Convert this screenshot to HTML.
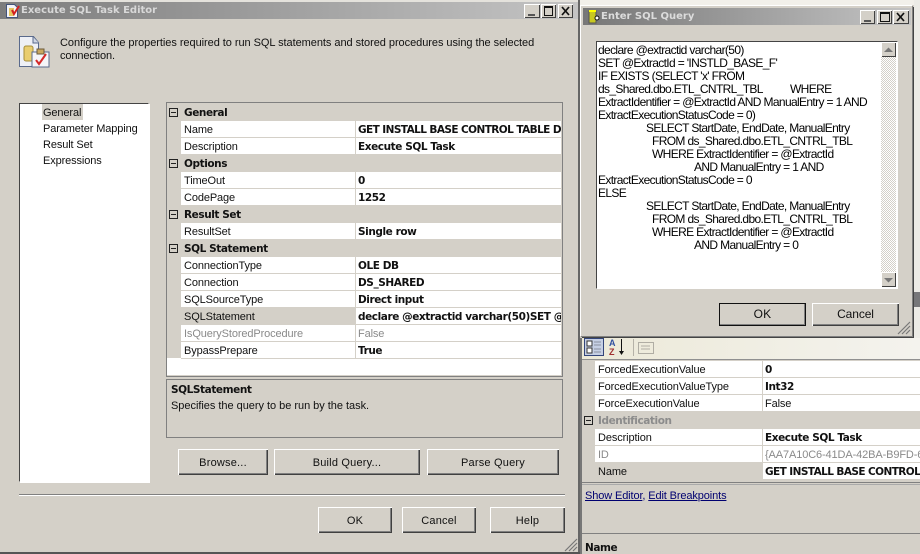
<!DOCTYPE html>
<html><head><meta charset="utf-8"><style>
html,body{margin:0;padding:0;background:#d4d0c8}
#p{position:relative;width:920px;height:554px;overflow:hidden;background:#d4d0c8;font:11px "Liberation Sans",sans-serif;color:#111}
#p div,#p svg{position:absolute}
.t{white-space:nowrap;line-height:14px;height:14px;margin-top:1px;letter-spacing:-.12px}
.b{font-family:"DejaVu Sans",sans-serif;font-weight:bold;font-size:10.5px;letter-spacing:-.42px}
.w{background:#fff}
.btn{background:#d4d0c8;box-shadow:inset 1px 1px 0 #fff,inset -1px -1px 0 #404040,inset -2px -2px 0 #808080;text-align:center;line-height:28px;font-size:11px;letter-spacing:.2px}
.tb{width:15px;height:14px;background:#d4d0c8;box-shadow:inset 1px 1px 0 #fff,inset -1px -1px 0 #404040}
.pm{width:7px;height:7px;border:1px solid #222;background:transparent}
.pm:after{content:"";position:absolute;left:1px;top:3px;width:5px;height:1px;background:#222}
.l{height:1px;background:#d4d0c8}
.q{font-size:12px;letter-spacing:-.64px;white-space:nowrap;line-height:13px;height:13px;color:#000;margin-top:1px}
</style></head><body><div id="p">

<!-- Left dialog -->
<div style="left:0;top:2px;width:578px;height:17px;background:linear-gradient(90deg,#7d7d7d,#c4c4c4)"></div>
<div style="left:0;top:0;width:578px;height:2px;background:#e4e2dc"></div>
<svg style="left:5px;top:3px" width="16" height="16" viewBox="0 0 16 16"><path d="M1.500 1.500h8l3 3v10h-11z" fill="#f4f4f8" stroke="#44557a"/><rect x="4" y="5" width="5" height="8" fill="#e6c660"/><path d="M7 7l2 4 5-8" fill="none" stroke="#d32020" stroke-width="2"/></svg>
<div class="t b" style="left:21px;top:3px;color:#d8d8d8;font-size:10px;letter-spacing:0">Execute SQL Task Editor</div>
<div class="tb" style="left:524px;top:4px;width:16px"></div>
<div style="left:528px;top:14px;width:7px;height:2px;background:#555"></div>
<div class="tb" style="left:541px;top:4px;width:15px"></div>
<div style="left:544px;top:6px;width:7px;height:7px;border:1px solid #111;border-top-width:2px"></div>
<div class="tb" style="left:558px;top:4px;width:15px"></div>
<svg style="left:558px;top:4px" width="15" height="14"><path d="M4 3l7 8M11 3l-7 8" stroke="#111" stroke-width="1.700"/></svg>
<div style="left:578px;top:0;width:2px;height:554px;background:#666"></div>
<div style="left:0;top:552px;width:580px;height:2px;background:#555"></div>

<!-- header -->
<svg style="left:18px;top:35px" width="34" height="33" viewBox="0 0 34 33"><path d="M1.500 1.500h14l5 6v24h-19z" fill="#eef0f6" stroke="#5a6a8c"/><path d="M15 2v6h6" fill="#cfd6e4" stroke="#5a6a8c"/><rect x="6" y="11" width="9" height="15" rx="2" fill="#e9cd70" stroke="#a58d3a"/><rect x="14" y="17" width="17" height="15" fill="#f5f5f8" stroke="#5a6a8c"/><rect x="19" y="14" width="7" height="5" fill="#c9a860" stroke="#6b5a3a"/><path d="M18 25l3 4 7-10" fill="none" stroke="#d42a2a" stroke-width="2"/></svg>
<div class="t" style="left:60px;top:35px;letter-spacing:-.05px">Configure the properties required to run SQL statements and stored procedures using the selected</div>
<div class="t" style="left:60px;top:48px">connection.</div>

<!-- list -->
<div class="w" style="left:19px;top:103px;width:128px;height:377px;border:1px solid #fff;border-left:1px solid #444;border-top:1px solid #444;box-shadow:1px 1px 0 #fff"></div>
<div style="left:42px;top:104px;width:41px;height:16px;background:#d4d0c8"></div>
<div class="t" style="left:43px;top:105px">General</div>
<div class="t" style="left:43px;top:121px">Parameter Mapping</div>
<div class="t" style="left:43px;top:137px">Result Set</div>
<div class="t" style="left:43px;top:153px">Expressions</div>

<!-- grid -->
<div style="left:166px;top:102px;width:395px;height:273px;border:1px solid #808080;background:#d4d0c8"></div>
<div class="w" style="left:181px;top:121px;width:380px;height:33px"></div>
<div class="w" style="left:181px;top:172px;width:380px;height:33px"></div>
<div class="w" style="left:181px;top:223px;width:380px;height:16px"></div>
<div class="w" style="left:181px;top:257px;width:380px;height:101px"></div>
<div style="left:181px;top:308px;width:174px;height:16px;background:#d4d0c8"></div>
<div class="w" style="left:167px;top:358px;width:394px;height:17px"></div>
<div class="l" style="left:181px;top:137px;width:380px"></div>
<div class="l" style="left:181px;top:188px;width:380px"></div>
<div class="l" style="left:181px;top:273px;width:380px"></div>
<div class="l" style="left:181px;top:290px;width:380px"></div>
<div class="l" style="left:181px;top:307px;width:380px"></div>
<div class="l" style="left:181px;top:324px;width:380px"></div>
<div class="l" style="left:181px;top:341px;width:380px"></div>
<div class="l" style="left:181px;top:358px;width:380px"></div>
<div style="left:355px;top:121px;width:1px;height:33px;background:#d4d0c8"></div>
<div style="left:355px;top:172px;width:1px;height:33px;background:#d4d0c8"></div>
<div style="left:355px;top:223px;width:1px;height:16px;background:#d4d0c8"></div>
<div style="left:355px;top:257px;width:1px;height:101px;background:#d4d0c8"></div>

<div class="pm" style="left:169px;top:108px"></div>
<div class="pm" style="left:169px;top:159px"></div>
<div class="pm" style="left:169px;top:210px"></div>
<div class="pm" style="left:169px;top:244px"></div>
<div class="t b" style="left:184px;top:105px">General</div>
<div class="t b" style="left:184px;top:156px">Options</div>
<div class="t b" style="left:184px;top:207px">Result Set</div>
<div class="t b" style="left:184px;top:241px">SQL Statement</div>

<div class="t" style="left:184px;top:122px">Name</div>
<div class="t" style="left:184px;top:139px">Description</div>
<div class="t" style="left:184px;top:173px">TimeOut</div>
<div class="t" style="left:184px;top:190px">CodePage</div>
<div class="t" style="left:184px;top:224px">ResultSet</div>
<div class="t" style="left:184px;top:258px">ConnectionType</div>
<div class="t" style="left:184px;top:275px">Connection</div>
<div class="t" style="left:184px;top:292px">SQLSourceType</div>
<div class="t" style="left:184px;top:309px">SQLStatement</div>
<div class="t" style="left:184px;top:326px;color:#8a8a8a">IsQueryStoredProcedure</div>
<div class="t" style="left:184px;top:343px">BypassPrepare</div>

<div style="left:358px;top:122px;width:203px;height:16px;overflow:hidden"><div class="t b" style="left:0;top:0;letter-spacing:-.58px">GET INSTALL BASE CONTROL TABLE D</div></div>
<div class="t b" style="left:358px;top:139px">Execute SQL Task</div>
<div class="t b" style="left:358px;top:173px">0</div>
<div class="t b" style="left:358px;top:190px">1252</div>
<div class="t b" style="left:358px;top:224px">Single row</div>
<div class="t b" style="left:358px;top:258px">OLE DB</div>
<div class="t b" style="left:358px;top:275px">DS_SHARED</div>
<div class="t b" style="left:358px;top:292px">Direct input</div>
<div style="left:358px;top:309px;width:203px;height:16px;overflow:hidden"><div class="t b" style="left:0;top:0">declare @extractid varchar(50)SET @Extr</div></div>
<div class="t" style="left:358px;top:326px;color:#8a8a8a">False</div>
<div class="t b" style="left:358px;top:343px">True</div>

<!-- description -->
<div style="left:166px;top:379px;width:395px;height:57px;border:1px solid #808080"></div>
<div class="t b" style="left:171px;top:382px">SQLStatement</div>
<div class="t" style="left:171px;top:398px;letter-spacing:-.03px">Specifies the query to be run by the task.</div>

<!-- buttons -->
<div class="btn" style="left:178px;top:449px;width:90px;height:26px">Browse...</div>
<div class="btn" style="left:274px;top:449px;width:146px;height:26px">Build Query...</div>
<div class="btn" style="left:427px;top:449px;width:132px;height:26px">Parse Query</div>
<div style="left:19px;top:494px;width:546px;height:1px;background:#808080"></div>
<div style="left:19px;top:495px;width:546px;height:1px;background:#fff"></div>
<div class="btn" style="left:318px;top:507px;width:74px;height:26px">OK</div>
<div class="btn" style="left:402px;top:507px;width:74px;height:26px">Cancel</div>
<div class="btn" style="left:490px;top:507px;width:75px;height:26px">Help</div>
<svg style="left:563px;top:537px" width="15" height="15"><path d="M2 14L14 2M6 14L14 6M10 14l4-4" stroke="#777" stroke-width="1.200"/></svg>

<!-- Right background -->
<div style="left:580px;top:0;width:340px;height:554px;background:#d4d0c8"></div>
<div style="left:580px;top:0;width:340px;height:5px;background:#f2f0ea"></div>
<div style="left:914px;top:0;width:6px;height:338px;background:#ecebe6"></div>
<div style="left:914px;top:292px;width:6px;height:15px;background:#77777a"></div>

<!-- properties panel -->
<div style="left:580px;top:338px;width:2px;height:216px;background:#777"></div>
<div style="left:582px;top:338px;width:338px;height:21px;background:linear-gradient(90deg,#ece9d8,#f4f3ee)"></div>
<div style="left:582px;top:359px;width:338px;height:1px;background:#909090"></div>
<svg style="left:584px;top:338px" width="80" height="20" viewBox="0 0 80 20"><rect x=".5" y=".5" width="19" height="17" fill="#c5cfe4" stroke="#33457a"/><rect x="3" y="3" width="5" height="5" fill="#fff" stroke="#333"/><rect x="3" y="10" width="5" height="5" fill="#fff" stroke="#333"/><path d="M10 4h7M10 7h7M10 11h7M10 14h7" stroke="#8a90a0"/><text x="25" y="8" font-family="Liberation Sans" font-size="9" font-weight="bold" fill="#3050a0">A</text><text x="25" y="17" font-family="Liberation Sans" font-size="9" font-weight="bold" fill="#a03030">Z</text><path d="M37.500 1v13" stroke="#111"/><path d="M35 13h5l-2.500 4z" fill="#111"/><path d="M49.500 1v17" stroke="#b5b2a8"/><rect x="54.500" y="4.500" width="15" height="11" fill="none" stroke="#b0ada4"/><path d="M57 8h9M57 11h9" stroke="#b0ada4"/></svg>

<div class="w" style="left:595px;top:361px;width:325px;height:50px"></div>
<div class="w" style="left:595px;top:429px;width:325px;height:33px"></div>
<div class="w" style="left:763px;top:463px;width:157px;height:16px"></div>
<div class="l" style="left:595px;top:377px;width:325px"></div>
<div class="l" style="left:595px;top:394px;width:325px"></div>
<div class="l" style="left:595px;top:445px;width:325px"></div>
<div class="l" style="left:595px;top:462px;width:325px"></div>
<div style="left:762px;top:361px;width:1px;height:50px;background:#d4d0c8"></div>
<div style="left:762px;top:429px;width:1px;height:50px;background:#d4d0c8"></div>
<div class="t" style="left:598px;top:362px">ForcedExecutionValue</div>
<div class="t" style="left:598px;top:379px">ForcedExecutionValueType</div>
<div class="t" style="left:598px;top:396px">ForceExecutionValue</div>
<div class="pm" style="left:584px;top:416px"></div>
<div class="t b" style="left:598px;top:413px;color:#8c8c8c">Identification</div>
<div class="t" style="left:598px;top:430px">Description</div>
<div class="t" style="left:598px;top:447px;color:#8a8a8a">ID</div>
<div class="t" style="left:598px;top:464px">Name</div>
<div class="t b" style="left:765px;top:362px">0</div>
<div class="t b" style="left:765px;top:379px">Int32</div>
<div class="t" style="left:765px;top:396px">False</div>
<div class="t b" style="left:765px;top:430px">Execute SQL Task</div>
<div style="left:765px;top:447px;width:155px;height:16px;overflow:hidden"><div class="t" style="left:0;top:0;color:#8a8a8a">{AA7A10C6-41DA-42BA-B9FD-6</div></div>
<div style="left:765px;top:464px;width:155px;height:16px;overflow:hidden"><div class="t b" style="left:0;top:0;letter-spacing:-.58px">GET INSTALL BASE CONTROL</div></div>
<div style="left:582px;top:482px;width:338px;height:1px;background:#808080"></div>
<div style="left:582px;top:484px;width:338px;height:1px;background:#aaa"></div>
<div class="t" style="left:585px;top:488px;color:#000070"><span style="text-decoration:underline">Show Editor</span>, <span style="text-decoration:underline">Edit Breakpoints</span></div>
<div style="left:582px;top:533px;width:338px;height:1px;background:#808080"></div>
<div class="t b" style="left:585px;top:540px">Name</div>

<!-- Enter SQL Query dialog -->
<div style="left:580px;top:5px;width:332px;height:331px;background:#d4d0c8;box-shadow:inset 1px 1px 0 #fff,1px 1px 0 #808080,2px 2px 0 #444"></div>
<div style="left:583px;top:8px;width:328px;height:17px;background:linear-gradient(90deg,#777,#c4c4c4)"></div>
<svg style="left:587px;top:8px" width="14" height="17" viewBox="0 0 14 17"><rect x="2" y="3" width="7" height="12" fill="#c8c820" stroke="#555"/><path d="M2 3h7" stroke="#ff0" stroke-width="2"/><circle cx="10" cy="10" r="2" fill="#fff" stroke="#111"/></svg>
<div class="t b" style="left:601px;top:9px;color:#dcdcdc;font-size:10px;letter-spacing:0">Enter SQL Query</div>
<div class="tb" style="left:860px;top:10px"></div>
<div style="left:864px;top:20px;width:7px;height:2px;background:#555"></div>
<div class="tb" style="left:877px;top:10px"></div>
<div style="left:880px;top:12px;width:8px;height:7px;border:1px solid #111;border-top-width:2px"></div>
<div class="tb" style="left:893px;top:10px;width:16px"></div>
<svg style="left:893px;top:10px" width="16" height="14"><path d="M4 3l7 8M11 3l-7 8" stroke="#111" stroke-width="1.700"/></svg>

<div class="w" style="left:596px;top:41px;width:300px;height:246px;border-top:1px solid #444;border-left:1px solid #444;border-right:1px solid #fff;border-bottom:1px solid #fff"></div>
<div style="left:881px;top:42px;width:15px;height:245px;background:repeating-conic-gradient(#d4d0c8 0 25%,#fff 0 50%) 0 0/2px 2px"></div>
<div class="tb" style="left:881px;top:42px;height:15px"></div>
<svg style="left:881px;top:42px" width="15" height="16"><path d="M3 10h9l-4.500-4.500z" fill="#777"/></svg>
<div class="tb" style="left:881px;top:272px;height:15px"></div>
<svg style="left:881px;top:272px" width="15" height="16"><path d="M3 6h9l-4.500 4.500z" fill="#777"/></svg>

<div class="q" style="left:598px;top:43px">declare @extractid varchar(50)</div>
<div class="q" style="left:598px;top:56px">SET @ExtractId = 'INSTLD_BASE_F'</div>
<div class="q" style="left:598px;top:69px">IF EXISTS (SELECT 'x' FROM</div>
<div class="q" style="left:598px;top:82px">ds_Shared.dbo.ETL_CNTRL_TBL</div>
<div class="q" style="left:790px;top:82px">WHERE</div>
<div class="q" style="left:598px;top:95px">ExtractIdentifier = @ExtractId AND ManualEntry = 1 AND</div>
<div class="q" style="left:598px;top:108px">ExtractExecutionStatusCode = 0)</div>
<div class="q" style="left:646px;top:121px">SELECT StartDate, EndDate, ManualEntry</div>
<div class="q" style="left:652px;top:134px">FROM ds_Shared.dbo.ETL_CNTRL_TBL</div>
<div class="q" style="left:652px;top:147px">WHERE ExtractIdentifier = @ExtractId</div>
<div class="q" style="left:694px;top:160px">AND ManualEntry = 1 AND</div>
<div class="q" style="left:598px;top:173px">ExtractExecutionStatusCode = 0</div>
<div class="q" style="left:598px;top:186px">ELSE</div>
<div class="q" style="left:646px;top:199px">SELECT StartDate, EndDate, ManualEntry</div>
<div class="q" style="left:652px;top:212px">FROM ds_Shared.dbo.ETL_CNTRL_TBL</div>
<div class="q" style="left:652px;top:225px">WHERE ExtractIdentifier = @ExtractId</div>
<div class="q" style="left:694px;top:238px">AND ManualEntry = 0</div>

<div class="btn" style="left:719px;top:303px;width:87px;height:23px;line-height:23px;outline:1px solid #111;outline-offset:-1px;font-size:12px">OK</div>
<div class="btn" style="left:812px;top:303px;width:87px;height:23px;line-height:23px;font-size:12px;letter-spacing:-.1px">Cancel</div>
<svg style="left:897px;top:320px" width="14" height="15"><path d="M1 14L13 2M5 14L13 6M9 14l4-4" stroke="#777" stroke-width="1.200"/></svg>
</div></body></html>
